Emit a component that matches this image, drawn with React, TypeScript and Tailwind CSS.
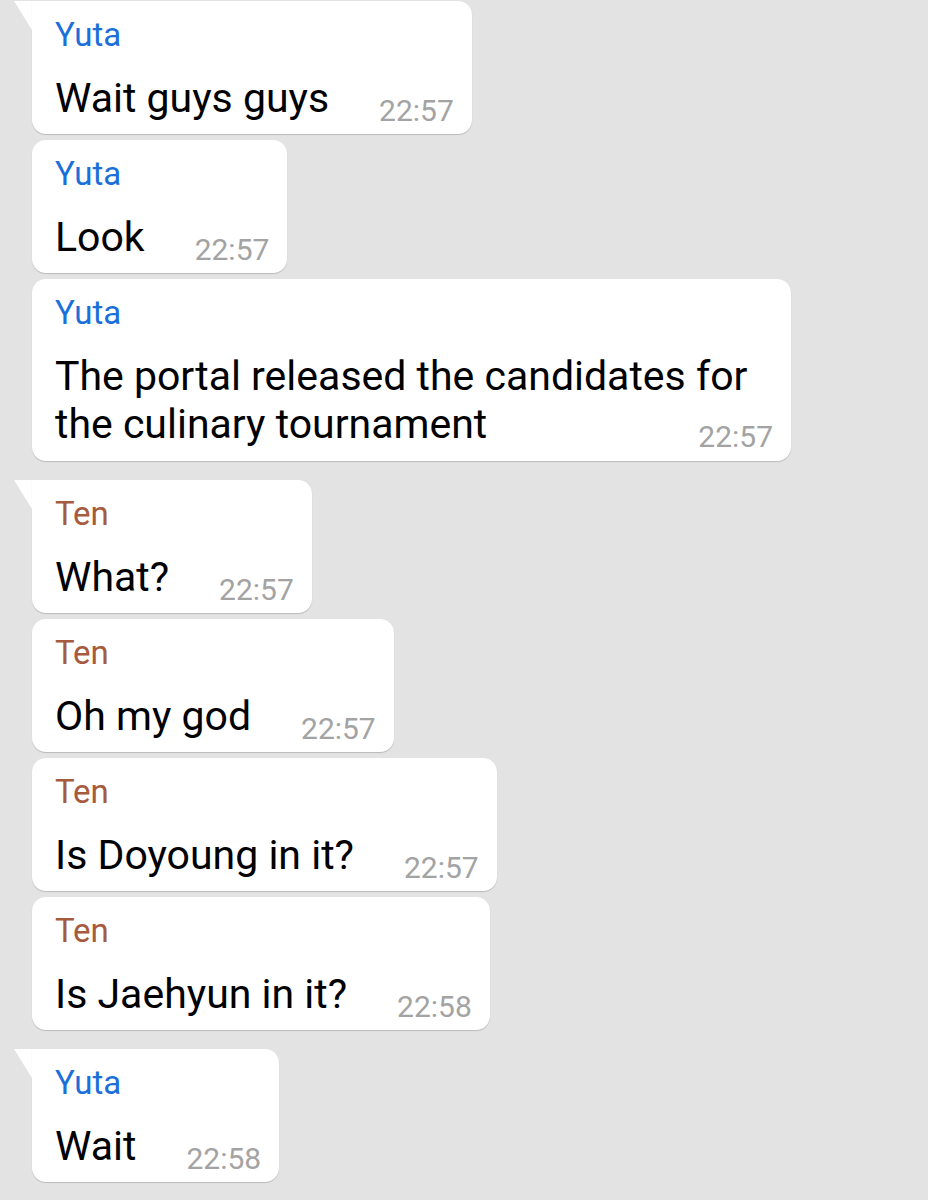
type Msg = {
  name: string;
  lines: string[];
  time: string;
  tail?: boolean;
  wide?: boolean;
};

const NAME_COLORS: Record<string, string> = {
  Yuta: 'text-[#1b6fd9]',
  Ten: 'text-[#a65a3e]',
};

const messages: Msg[] = [
  { name: 'Yuta', lines: ['Wait guys guys'], time: '22:57', tail: true },
  { name: 'Yuta', lines: ['Look'], time: '22:57' },
  { name: 'Yuta', lines: ['The portal released the candidates for', 'the culinary tournament'], time: '22:57', wide: true },
  { name: 'Ten', lines: ['What?'], time: '22:57', tail: true },
  { name: 'Ten', lines: ['Oh my god'], time: '22:57' },
  { name: 'Ten', lines: ['Is Doyoung in it?'], time: '22:57' },
  { name: 'Ten', lines: ['Is Jaehyun in it?'], time: '22:58' },
  { name: 'Yuta', lines: ['Wait'], time: '22:58', tail: true },
];

function Tail() {
  return (
    <svg width="18" height="30" viewBox="0 0 18 30" className="shrink-0">
      <path d="M0 0 H18 V29 Z" fill="#ffffff" />
    </svg>
  );
}

function Bubble({ msg }: { msg: Msg }) {
  const first = msg.lines.slice(0, -1);
  const last = msg.lines[msg.lines.length - 1];
  return (
    <div className={`flex ${msg.tail ? 'mt-[13px] first:mt-0' : ''}`}>
      {msg.tail ? <Tail /> : <div className="w-[18px] shrink-0" />}
      <div
        className={`bg-white pl-[23px] pr-[18px] pt-[14px] shadow-[0_1px_1px_rgba(0,0,0,0.18)] ${
          msg.wide ? 'pb-[13px]' : 'pb-[12px]'
        } ${msg.tail ? 'rounded-[14px] rounded-tl-none' : 'rounded-[14px]'}`}
      >
        <div className={`text-[33px] leading-[40px] ${NAME_COLORS[msg.name]}`}>{msg.name}</div>
        <div
          className={`mt-[19px] text-[41px] leading-[48px] text-black whitespace-nowrap ${
            msg.wide ? 'w-[718px]' : ''
          }`}
        >
          {first.map((l, i) => (
            <p key={i}>{l}</p>
          ))}
          <div className="flex items-end justify-between gap-[50px]">
            <p>{last}</p>
            <span className="text-[30px] leading-[22px] text-[#a3a3a3]">{msg.time}</span>
          </div>
        </div>
      </div>
    </div>
  );
}

export default function App() {
  return (
    <div
      className="min-h-[1200px] w-[928px] bg-[#e3e3e3] pl-[14px] pt-[1px]"
      style={{ fontFamily: 'Roboto, "Noto Sans", sans-serif' }}
    >
      <div className="flex flex-col gap-[6px]">
        {messages.map((m, i) => (
          <Bubble key={i} msg={m} />
        ))}
      </div>
    </div>
  );
}
